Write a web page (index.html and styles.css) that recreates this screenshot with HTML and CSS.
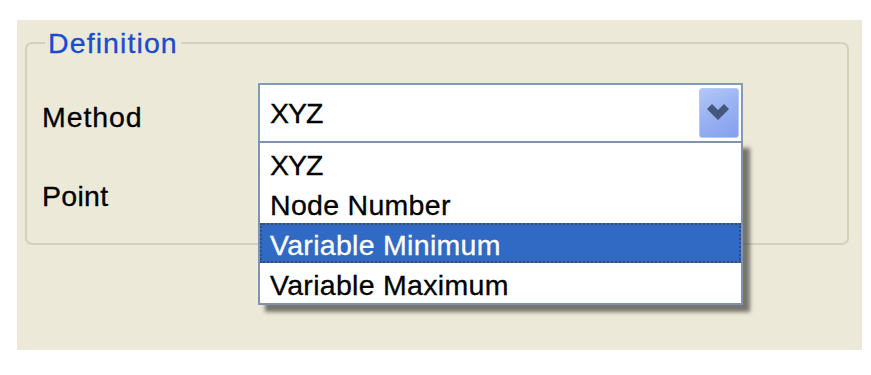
FILE: index.html
```html
<!DOCTYPE html>
<html>
<head>
<meta charset="utf-8">
<link rel="stylesheet" href="styles.css">
</head>
<body>
<div class="panel">
  <fieldset class="group">
    <legend class="group-title">Definition</legend>
    <div class="row row-method">
      <span class="label">Method</span>
      <div class="combo">
        <span class="combo-value">XYZ</span>
        <span class="combo-btn">
          <svg class="chevron" width="22" height="16" viewBox="0 0 22 16"><path d="M0 5 L5 0 L11 6 L17 0 L22 5 L11 16 Z" fill="#45577A"/></svg>
        </span>
        <ul class="dropdown">
          <li class="item">XYZ</li>
          <li class="item">Node Number</li>
          <li class="item item-selected">Variable Minimum</li>
          <li class="item">Variable Maximum</li>
        </ul>
      </div>
    </div>
    <div class="row row-point">
      <span class="label">Point</span>
    </div>
  </fieldset>
</div>
</body>
</html>
```
FILE: styles.css
```css
html, body {
  margin: 0;
  padding: 0;
  background: #ffffff;
}
body {
  font-family: "Liberation Sans", Arial, sans-serif;
  font-size: 28.5px;
  letter-spacing: 0.3px;
  color: #000;
  -webkit-text-stroke: 0.3px currentColor;
}
.panel {
  margin: 20px 0 0 17px;
  width: 845px;
  height: 330px;
  background: #ECE9D8;
  padding-top: 7px;
  box-sizing: border-box;
}
.group {
  margin: 0 13px 0 8px;
  padding: 24px 0 30px 15px;
  border: 2px solid #D3D0BE;
  border-radius: 7px;
  min-width: 0;
}
.group-title {
  margin-left: 3px;
  padding: 0 3px;
  line-height: 32px;
  letter-spacing: 1.1px;
  color: #1A4CD2;
}
.row {
  display: flex;
  align-items: flex-start;
}
.row-method {
  height: 60px;
}
.label {
  width: 216px;
  line-height: 33px;
  flex: none;
}
.row-method .label {
  margin-top: 18px;
  letter-spacing: 0.9px;
}
.row-point {
  margin-top: 37px;
  height: 33px;
}
.combo {
  position: relative;
  width: 485px;
  height: 60px;
  box-sizing: border-box;
  border: 2px solid #7F9DB9;
  background: #fff;
  display: flex;
  align-items: center;
  padding: 0 2px 0 10px;
}
.combo-value {
  line-height: 33px;
  letter-spacing: -1px;
}
.combo-btn {
  margin-left: auto;
  width: 40px;
  height: 50px;
  box-sizing: border-box;
  border: 1px solid #B6C8F6;
  border-radius: 3px;
  background: linear-gradient(150deg, #B4C7F8 0%, #9AB3F2 45%, #859FEE 100%);
  display: flex;
  align-items: center;
  justify-content: center;
}
.chevron {
  margin-left: -3px;
  margin-top: -2px;
}
.dropdown {
  position: absolute;
  left: -2px;
  top: 100%;
  width: 485px;
  box-sizing: border-box;
  margin: 0;
  padding: 0;
  list-style: none;
  background: #fff;
  border: 2px solid #7F93B0;
  box-shadow: 7px 7px 4px rgba(40, 40, 40, 0.6);
  z-index: 2;
}
.item {
  height: 40px;
  box-sizing: border-box;
  padding: 4px 0 0 10px;
  line-height: 36px;
  white-space: nowrap;
  color: #000;
}
.item:first-child {
  letter-spacing: -1px;
}
.item-selected {
  background: #316AC5;
  color: #fff;
  outline: 2px dotted #3C4B66;
  outline-offset: -2px;
}
```
